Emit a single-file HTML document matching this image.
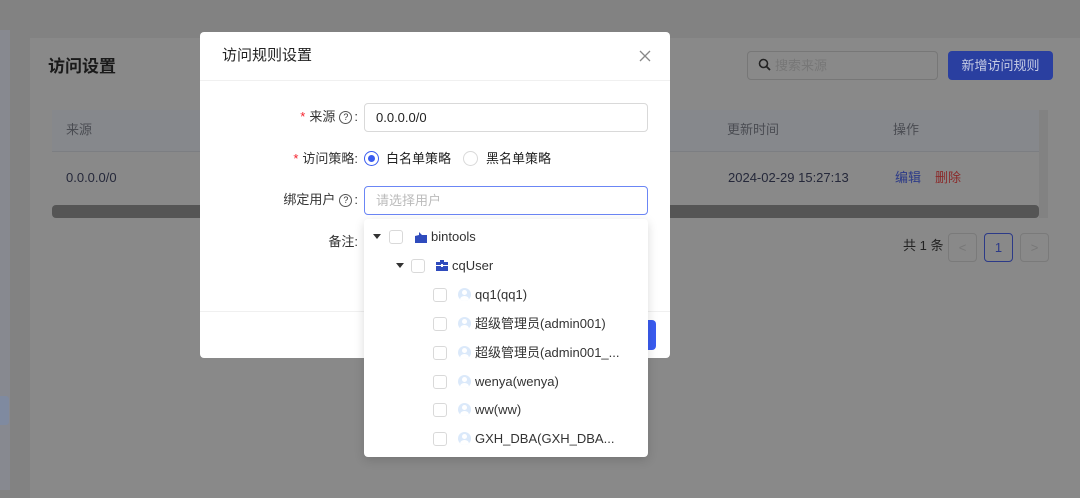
<!DOCTYPE html>
<html><head><meta charset="utf-8"><style>
*{box-sizing:border-box;margin:0;padding:0}
body{width:1080px;height:488px;overflow:hidden;background:#828282;font-family:"Liberation Sans","Noto Sans CJK SC",sans-serif;font-size:13px;line-height:16px;position:relative;color:#222}
.abs{position:absolute}
.card{left:30px;top:38px;width:1050px;height:460px;background:#898989}
.side{left:0;top:30px;width:10px;height:460px;background:#878990}
.modal{left:200px;top:32px;width:470px;height:326px;background:#fff;border-radius:4px}
.lbl{color:#333;font-size:13px;width:160px;height:16px;white-space:nowrap;display:flex;justify-content:flex-end;align-items:center}
.star{color:#f5222d;margin-right:4px}
.q{display:inline-block;width:13px;height:13px;border:1px solid #555;border-radius:50%;font-size:9px;line-height:11px;text-align:center;margin:0 2px 0 4px}
.inp{border:1px solid #d9d9d9;border-radius:4px;height:29px;width:284px;left:364px;padding-left:11px;line-height:27px;font-size:13px}
.dd{left:364px;top:219px;width:284px;height:238px;background:#fff;border-radius:4px;box-shadow:0 3px 10px rgba(0,0,0,.15)}
.cb{position:absolute;width:14px;height:14px;border:1px solid #d9d9d9;border-radius:3px;background:#fff}
.row{position:absolute;height:20px;font-size:13px;color:#333;line-height:20px}
.av{position:absolute;width:13px;height:13px;border-radius:50%;background:#dbe9fa;overflow:hidden}
.av:before{content:"";position:absolute;left:4px;top:2px;width:5px;height:5px;border-radius:50%;background:#fff}
.av:after{content:"";position:absolute;left:2px;top:8px;width:9px;height:7px;border-radius:50%;background:#fff}
.tri{position:absolute;width:0;height:0;border-left:4px solid transparent;border-right:4px solid transparent;border-top:5px solid #333}
</style></head><body>
<div class="abs side"></div>
<div class="abs" style="left:0;top:396px;width:9px;height:29px;background:#7f8aa0;border-radius:0 3px 3px 0"></div>
<div class="abs card"></div>
<div class="abs" style="left:48px;top:57px;font-size:17px;line-height:20px;font-weight:bold;color:#1a1a1a">访问设置</div>
<div class="abs" style="left:52px;top:110px;width:996px;height:42px;background:#86888c;border-bottom:1px solid #7c7e82"></div>
<div class="abs" style="left:66px;top:122px;color:#4a4c52">来源</div>
<div class="abs" style="left:727px;top:122px;color:#4a4c52">更新时间</div>
<div class="abs" style="left:893px;top:122px;color:#4a4c52">操作</div>
<div class="abs" style="left:66px;top:170px;color:#25283a">0.0.0.0/0</div>
<div class="abs" style="left:728px;top:170px;color:#25283a">2024-02-29 15:27:13</div>
<div class="abs" style="left:895px;top:170px;color:#2c3a88">编辑</div>
<div class="abs" style="left:935px;top:170px;color:#8b2a2a">删除</div>
<div class="abs" style="left:52px;top:205px;width:987px;height:13px;background:#555;border-radius:4px"></div>
<div class="abs" style="left:1039px;top:110px;width:9px;height:108px;background:#828282"></div>
<div class="abs" style="left:747px;top:51px;width:191px;height:29px;border:1px solid #777;border-radius:4px;color:#777;padding-left:27px;line-height:27px">搜索来源</div>
<svg class="abs" style="left:758px;top:58px" width="13" height="13" viewBox="0 0 13 13"><circle cx="5.5" cy="5.5" r="4" fill="none" stroke="#222" stroke-width="1.6"/><path d="M8.5 8.5L12 12" stroke="#222" stroke-width="1.8"/></svg>
<div class="abs" style="left:948px;top:51px;width:105px;height:29px;background:#2a3fa0;border-radius:4px;color:#c5cbe4;text-align:center;line-height:29px">新增访问规则</div>
<div class="abs" style="left:903px;top:238px;color:#222">共 1 条</div>
<div class="abs" style="left:948px;top:233px;width:29px;height:29px;border:1px solid #7a7a7a;border-radius:4px;color:#777;text-align:center;line-height:27px">&lt;</div>
<div class="abs" style="left:984px;top:233px;width:29px;height:29px;border:1px solid #2c3a88;border-radius:4px;color:#2c3a88;text-align:center;line-height:27px">1</div>
<div class="abs" style="left:1020px;top:233px;width:29px;height:29px;border:1px solid #7a7a7a;border-radius:4px;color:#777;text-align:center;line-height:27px">&gt;</div>

<div class="abs modal"></div>
<div class="abs" style="left:222px;top:47px;font-size:15px;line-height:18px;color:#222">访问规则设置</div>
<svg class="abs" style="left:639px;top:50px" width="12" height="12" viewBox="0 0 12 12"><path d="M1 1L11 11M11 1L1 11" stroke="#888" stroke-width="1.3"/></svg>
<div class="abs" style="left:200px;top:80px;width:470px;height:1px;background:#f0f0f0"></div>
<div class="abs" style="left:200px;top:311px;width:470px;height:1px;background:#f0f0f0"></div>
<div class="abs" style="left:630px;top:320px;width:26px;height:30px;background:#3a5cf0;border-radius:4px"></div>

<div class="abs lbl" style="left:198px;top:109px"><span class="star">*</span>来源<span class="q">?</span>:</div>
<div class="abs inp" style="top:103px;color:#222">0.0.0.0/0</div>
<div class="abs lbl" style="left:198px;top:151px"><span class="star">*</span>访问策略:</div>
<div class="abs" style="left:364px;top:151px;width:15px;height:15px;border:1px solid #3a5cf0;border-radius:50%"></div>
<div class="abs" style="left:368px;top:155px;width:7px;height:7px;background:#3a5cf0;border-radius:50%"></div>
<div class="abs" style="left:386px;top:151px">白名单策略</div>
<div class="abs" style="left:463px;top:151px;width:15px;height:15px;border:1px solid #d9d9d9;border-radius:50%"></div>
<div class="abs" style="left:486px;top:151px">黑名单策略</div>
<div class="abs lbl" style="left:198px;top:192px">绑定用户<span class="q">?</span>:</div>
<div class="abs inp" style="top:186px;border-color:#6b86f5;color:#bbb">请选择用户</div>
<div class="abs lbl" style="left:198px;top:234px">备注:</div>

<div class="abs dd">
 <div class="tri" style="left:9px;top:15px"></div>
 <div class="cb" style="left:25px;top:11px"></div>
 <svg class="abs" style="left:51px;top:12px" width="12" height="12" viewBox="0 0 12 12"><path d="M0 12V5l4-1V1l3 3h5v8z" fill="#2f4bbd"/></svg>
 <div class="row" style="left:67px;top:8px">bintools</div>
 <div class="tri" style="left:32px;top:44px"></div>
 <div class="cb" style="left:47px;top:40px"></div>
 <svg class="abs" style="left:72px;top:41px" width="12" height="11" viewBox="0 0 12 11"><path d="M4 2V0h4v2h4v9H0V2z" fill="#2f4bbd"/><rect x="0" y="5" width="12" height="1" fill="#fff"/><rect x="5" y="4" width="2" height="3" fill="#fff"/></svg>
 <div class="row" style="left:88px;top:37px">cqUser</div>
 <div class="cb" style="left:69px;top:69px"></div><div class="av" style="left:94px;top:69px"></div><div class="row" style="left:111px;top:66px">qq1(qq1)</div>
 <div class="cb" style="left:69px;top:98px"></div><div class="av" style="left:94px;top:98px"></div><div class="row" style="left:111px;top:95px">超级管理员(admin001)</div>
 <div class="cb" style="left:69px;top:127px"></div><div class="av" style="left:94px;top:127px"></div><div class="row" style="left:111px;top:124px">超级管理员(admin001_...</div>
 <div class="cb" style="left:69px;top:156px"></div><div class="av" style="left:94px;top:156px"></div><div class="row" style="left:111px;top:153px">wenya(wenya)</div>
 <div class="cb" style="left:69px;top:184px"></div><div class="av" style="left:94px;top:184px"></div><div class="row" style="left:111px;top:181px">ww(ww)</div>
 <div class="cb" style="left:69px;top:213px"></div><div class="av" style="left:94px;top:213px"></div><div class="row" style="left:111px;top:210px">GXH_DBA(GXH_DBA...</div>
</div>
</body></html>
